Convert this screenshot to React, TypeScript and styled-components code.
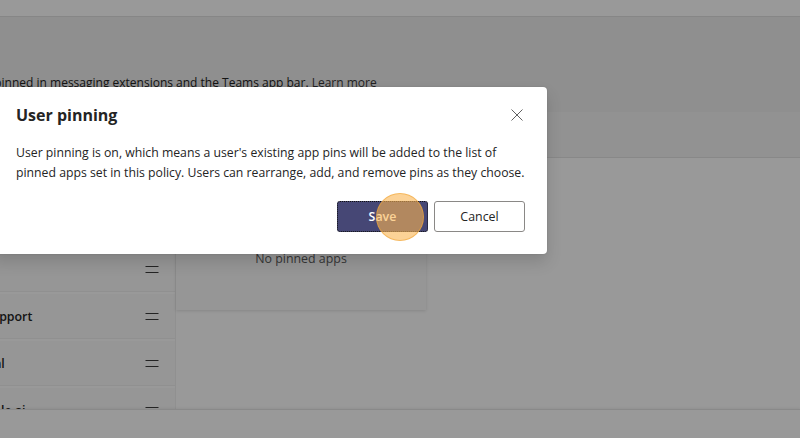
import styled, { createGlobalStyle } from "styled-components"

const GlobalStyle = createGlobalStyle`
    html, body {
        margin: 0;
        padding: 0;
        overflow: hidden;
        background: #ffffff;
    }
    body {
        font-family: "Open Sans", "Noto Sans", sans-serif;
        color: #242424;
    }
`;

const listApps = [
    { id: 1, name: "Files" },
    { id: 2, name: "HR Support" },
    { id: 3, name: "Pivotal" },
    { id: 4, name: "Notable ai" },
];

function DragHandle() {
    return (
        <svg width="14" height="10" viewBox="0 0 14 10" fill="none">
            <path d="M0.5 2.5H13.5M0.5 8.5H13.5" stroke="#3d3d3d" strokeWidth="1.1" />
        </svg>
    )
}

function CloseIcon() {
    return (
        <svg width="12" height="12" viewBox="0 0 12 12" fill="none">
            <path d="M0.5 0.5L11.5 11.5M11.5 0.5L0.5 11.5" stroke="#616161" strokeWidth="1" />
        </svg>
    )
}

function App() {
    return (
        <Page>
            <GlobalStyle />
            <Backdrop>
                <TopBar />
                <IntroBand>
                    <IntroText>
                        Apps that are pinned in messaging extensions and the Teams app bar. <LearnMore>Learn more</LearnMore>
                    </IntroText>
                </IntroBand>
                <ToolbarBand />
                <Main>
                    <ListColumn>
                        {listApps.map((app) => {
                            return <AppRow key={app.id}>
                                <AppName>{app.name}</AppName>
                                <DragHandle />
                            </AppRow>
                        })}
                    </ListColumn>
                    <CardColumn>
                        <Card>
                            <Empty>No pinned apps</Empty>
                        </Card>
                    </CardColumn>
                </Main>
                <Footer />
            </Backdrop>
            <Overlay />
            <Dialog>
                <DialogHeader>
                    <Title>User pinning</Title>
                    <CloseButton><CloseIcon /></CloseButton>
                </DialogHeader>
                <Body>
                    User pinning is on, which means a user's existing app pins will be added to the list of<br />
                    pinned apps set in this policy. Users can rearrange, add, and remove pins as they choose.
                </Body>
                <Actions>
                    <Button $primary>Save</Button>
                    <Button>Cancel</Button>
                </Actions>
            </Dialog>
            <ClickMark />
        </Page>
    )
}

const Page = styled.div`
    position: relative;
    width: 800px;
    height: 438px;
    overflow: hidden;
`;

const Backdrop = styled.div`
    display: flex;
    flex-direction: column;
    width: 912px;
    height: 438px;
    margin-left: -112px;
`;

const TopBar = styled.div`
    height: 16px;
    background: #ffffff;
    border-bottom: 1px solid #e0e0e0;
`;

const IntroBand = styled.div`
    height: 95px;
    box-sizing: border-box;
    padding: 56px 0 0 28px;
    background: #eeeeee;
`;

const IntroText = styled.p`
    margin: 0;
    font-size: 12px;
    line-height: 20px;
    color: #242424;
    white-space: nowrap;
`;

const LearnMore = styled.span`
    color: #3a3a3a;
    text-decoration: underline;
`;

const ToolbarBand = styled.div`
    height: 45px;
    background: #f3f3f3;
    border-bottom: 1px solid #e3e3e3;
`;

const Main = styled.div`
    flex: 1;
    display: flex;
    overflow: hidden;
    background: #ffffff;
`;

const ListColumn = styled.div`
    width: 288px;
    box-sizing: border-box;
    padding-top: 89px;
    border-right: 1px solid #f0f0f0;
    display: flex;
    flex-direction: column;
    gap: 2px;
`;

const AppRow = styled.div`
    height: 44px;
    flex-shrink: 0;
    display: flex;
    align-items: center;
    justify-content: space-between;
    padding: 0 16px 0 76px;
    background: #fafafa;
    border-bottom: 1px solid #f0f0f0;
`;

const AppName = styled.span`
    font-size: 12.4px;
    font-weight: 600;
    color: #242424;
`;

const CardColumn = styled.div`
    padding-top: 17px;
`;

const Card = styled.div`
    width: 250px;
    height: 135px;
    box-sizing: border-box;
    padding-top: 74px;
    background: #fbfbfb;
    box-shadow: 0 1px 3px rgba(0, 0, 0, 0.12);
    display: flex;
    justify-content: center;
`;

const Empty = styled.span`
    font-size: 12.4px;
    line-height: 20px;
    color: #5c5c5c;
`;

const Footer = styled.div`
    height: 28px;
    flex-shrink: 0;
    background: #ffffff;
    border-top: 1px solid #e4e4e4;
    box-shadow: 0 -1px 2px rgba(0, 0, 0, 0.06);
`;

const Overlay = styled.div`
    position: absolute;
    inset: 0;
    background: rgba(0, 0, 0, 0.4);
`;

const Dialog = styled.div`
    position: absolute;
    top: 87px;
    left: -8px;
    width: 555px;
    box-sizing: border-box;
    padding: 14px 22px 22px 24px;
    background: #ffffff;
    border-radius: 4px;
    box-shadow: 0 0 2px rgba(0, 0, 0, 0.12), 0 8px 16px rgba(0, 0, 0, 0.14);
    display: flex;
    flex-direction: column;
`;

const DialogHeader = styled.div`
    height: 28px;
    display: flex;
    align-items: center;
    justify-content: space-between;
`;

const Title = styled.h2`
    margin: 0;
    font-size: 16px;
    line-height: 28px;
    font-weight: 700;
    color: #242424;
`;

const CloseButton = styled.div`
    width: 12px;
    height: 12px;
    margin-right: 2px;
    display: flex;
`;

const Body = styled.p`
    margin: 14px 0 0;
    font-size: 12.25px;
    line-height: 19.5px;
    color: #242424;
    white-space: nowrap;
`;

const Actions = styled.div`
    margin-top: 19px;
    display: flex;
    justify-content: flex-end;
    gap: 6px;
`;

const Button = styled.button<{ $primary?: boolean }>`
    width: 91px;
    height: 31px;
    box-sizing: border-box;
    border-radius: 3px;
    font-family: "Open Sans", "Noto Sans", sans-serif;
    font-size: 12.4px;
    font-weight: ${(p) => (p.$primary ? 600 : 400)};
    color: ${(p) => (p.$primary ? "#ffffff" : "#242424")};
    background: ${(p) => (p.$primary ? "#464775" : "#ffffff")};
    border: 1px ${(p) => (p.$primary ? "dotted #111111" : "solid #8a8886")};
    padding: 0;
`;

const ClickMark = styled.div`
    position: absolute;
    top: 193px;
    left: 376px;
    width: 46px;
    height: 46px;
    border-radius: 50%;
    background: rgba(250, 180, 80, 0.6);
    border: 1.5px solid rgba(240, 165, 55, 0.6);
`;

export default App
